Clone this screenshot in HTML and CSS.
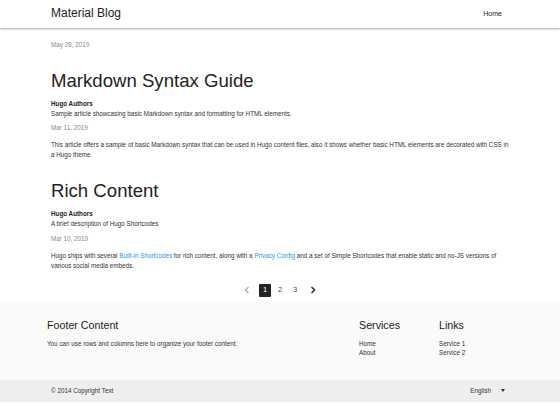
FILE: index.html
```html
<!DOCTYPE html>
<html lang="en">
<head>
<meta charset="utf-8">
<title>Material Blog</title>
<link rel="stylesheet" href="styles.css">
</head>
<body>
<header class="topbar">
  <div class="brand">Material Blog</div>
  <nav class="nav"><a href="#">Home</a></nav>
</header>
<main class="content">
  <div class="date first">May 28, 2019</div>
  <article class="post">
    <h1 class="title">Markdown Syntax Guide</h1>
    <div class="author">Hugo Authors</div>
    <div class="desc">Sample article showcasing basic Markdown syntax and formatting for HTML elements.</div>
    <div class="date">Mar 11, 2019</div>
    <p class="summary">This article offers a sample of basic Markdown syntax that can be used in Hugo content files, also it shows whether basic HTML elements are decorated with CSS in a Hugo theme.</p>
  </article>
  <article class="post">
    <h1 class="title">Rich Content</h1>
    <div class="author">Hugo Authors</div>
    <div class="desc">A brief description of Hugo Shortcodes</div>
    <div class="date">Mar 10, 2019</div>
    <p class="summary last">Hugo ships with several <a href="#">Built-in Shortcodes</a> for rich content, along with a <a href="#">Privacy Config</a> and a set of Simple Shortcodes that enable static and no-JS versions of various social media embeds.</p>
  </article>
  <nav class="pager">
    <span class="arrow prev"><svg width="8" height="8" viewBox="0 0 8 8"><path d="M5.5 1 L2.5 4 L5.5 7" fill="none" stroke="#aaa" stroke-width="1.3"/></svg></span>
    <span class="page active">1</span>
    <span class="page">2</span>
    <span class="page">3</span>
    <span class="arrow next"><svg width="8" height="8" viewBox="0 0 8 8"><path d="M2.5 1 L5.5 4 L2.5 7" fill="none" stroke="#222" stroke-width="1.4"/></svg></span>
  </nav>
</main>
<footer class="footer">
  <div class="footer-main">
    <div class="fcol wide">
      <h2 class="fhead">Footer Content</h2>
      <p class="ftext">You can use rows and columns here to organize your footer content.</p>
    </div>
    <div class="fcol services">
      <h2 class="fhead">Services</h2>
      <ul class="flist"><li>Home</li><li>About</li></ul>
    </div>
    <div class="fcol links">
      <h2 class="fhead">Links</h2>
      <ul class="flist"><li>Service 1</li><li>Service 2</li></ul>
    </div>
  </div>
  <div class="footer-bar">
    <span class="copy">© 2014 Copyright Text</span>
    <span class="lang">English <span class="caret"></span></span>
  </div>
</footer>
</body>
</html>
```
FILE: styles.css
```css
* { box-sizing: border-box; }
html, body { margin: 0; padding: 0; background: #fff; }
body {
  font-family: "Liberation Sans", Arial, sans-serif;
  color: #333;
  font-size: 6.3px;
  line-height: 9.8px;
}
a { color: inherit; text-decoration: none; }
.topbar {
  height: 28px;
  display: flex;
  align-items: center;
  justify-content: space-between;
  padding: 0 58px 0 51px;
  box-shadow: 0 1px 2px rgba(0,0,0,0.35);
  position: relative;
}
.brand { font-size: 12px; color: #222; }
.nav { font-size: 7px; color: #222; }
.content { padding: 12px 51px 0 51px; }
.date { color: #888; }
.date.first { margin-bottom: 17px; }
.title {
  font-size: 18.6px;
  font-weight: 400;
  color: #222;
  margin: 0 0 5px 0;
  padding-top: 1px;
  line-height: 26px;
}
.author { font-weight: 700; color: #222; }
.desc { margin-bottom: 5px; }
.post .date { margin-bottom: 7px; }
.summary { margin: 0 0 17px 0; line-height: 10px; }
.summary.last { margin-bottom: 13px; }
.summary a { color: #2196f3; }
.pager {
  display: flex;
  justify-content: center;
  align-items: center;
  gap: 3px;
  padding-bottom: 5px;
}
.page {
  width: 12px;
  height: 13px;
  display: flex;
  align-items: center;
  justify-content: center;
  font-size: 7.5px;
  color: #444;
}
.page.active { background: #222; color: #fff; border-radius: 1px; }
.arrow { width: 12px; height: 13px; display: flex; align-items: center; justify-content: center; }
.arrow.prev { margin-right: 3px; }
.arrow.next { margin-left: 3px; }
.footer { background: #fafafa; }
.footer-main {
  display: flex;
  height: 78px;
  padding: 16px 0 0 47px;
}
.fcol.wide { width: 312px; }
.fcol.services { width: 80px; }
.fhead { font-size: 10.7px; font-weight: 400; color: #222; margin: 0 0 7px 0; line-height: 14px; }
.ftext { margin: 0; }
.flist { list-style: none; margin: 0; padding: 0; line-height: 9px; }
.footer-bar {
  background: #eee;
  height: 22px;
  display: flex;
  align-items: center;
  justify-content: space-between;
  padding: 0 55px 0 51px;
}
.lang { display: flex; align-items: center; }
.caret {
  display: inline-block;
  margin-left: 10px;
  width: 0; height: 0;
  border-left: 2.5px solid transparent;
  border-right: 2.5px solid transparent;
  border-top: 3px solid #333;
}
```
